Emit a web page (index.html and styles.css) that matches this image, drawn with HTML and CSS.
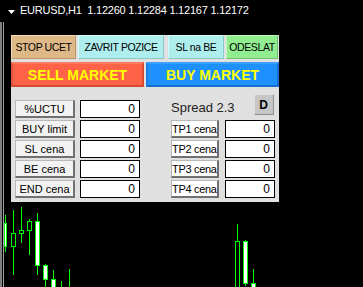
FILE: index.html
```html
<!DOCTYPE html>
<html>
<head>
<meta charset="utf-8">
<link rel="stylesheet" href="styles.css">
</head>
<body>
<div class="screen">
  <svg class="chart" width="363" height="287" viewBox="0 0 363 287">
    <line x1="1" y1="22" x2="1" y2="287" stroke="#808080" stroke-width="2"/>
    <line x1="3.5" y1="22" x2="3.5" y2="287" stroke="#a0a0a0" stroke-width="1"/>
    <g stroke="#00ff00" stroke-width="1">
      <line x1="5.5" y1="215" x2="5.5" y2="252"/>
      <rect x="4.5" y="223.5" width="2" height="23" fill="#fff"/>
      <line x1="13.5" y1="210" x2="13.5" y2="275"/>
      <rect x="11.5" y="233.5" width="4" height="13" fill="#000"/>
      <line x1="21.5" y1="207" x2="21.5" y2="243"/>
      <rect x="19.5" y="230.5" width="4" height="3" fill="#000"/>
      <line x1="29.5" y1="219" x2="29.5" y2="255"/>
      <rect x="27.5" y="221.5" width="4" height="9" fill="#000"/>
      <line x1="37.5" y1="213" x2="37.5" y2="275"/>
      <rect x="35.5" y="221.5" width="4" height="44" fill="#fff"/>
      <line x1="45.5" y1="264" x2="45.5" y2="287"/>
      <rect x="43.5" y="265.5" width="4" height="14" fill="#fff"/>
      <line x1="53.5" y1="270" x2="53.5" y2="287"/>
      <rect x="51.5" y="279.5" width="4" height="10" fill="#fff"/>
      <line x1="61.5" y1="281" x2="61.5" y2="287"/>
      <line x1="69.5" y1="269" x2="69.5" y2="287"/>
      <line x1="237.5" y1="224" x2="237.5" y2="287"/>
      <rect x="235.5" y="241.5" width="4" height="50" fill="#000"/>
      <line x1="245.5" y1="240" x2="245.5" y2="286"/>
      <rect x="243.5" y="241.5" width="4" height="42" fill="#fff"/>
      <line x1="253.5" y1="269" x2="253.5" y2="287"/>
      <rect x="251.5" y="283.5" width="4" height="8" fill="#fff"/>
    </g>
  </svg>

  <div class="title">
    <svg class="tri" width="7" height="4" viewBox="0 0 7 4"><polygon points="0,0 7,0 3.5,4" fill="#fff"/></svg>
    <span>EURUSD,H1&nbsp;&nbsp;1.12260 1.12284 1.12167 1.12172</span>
  </div>

  <div class="panel">
    <div class="row-top">
      <div class="tbtn stop">STOP UCET</div>
      <div class="tbtn zavrit">ZAVRIT POZICE</div>
      <div class="tbtn slbe">SL na BE</div>
      <div class="tbtn odeslat">ODESLAT</div>
    </div>
    <div class="row-market">
      <div class="mbtn sell">SELL MARKET</div>
      <div class="mbtn buy">BUY MARKET</div>
    </div>
    <div class="fields">
      <div class="col left">
        <div class="frow"><div class="lbl">%UCTU</div><div class="inp">0</div></div>
        <div class="frow"><div class="lbl">BUY limit</div><div class="inp">0</div></div>
        <div class="frow"><div class="lbl">SL cena</div><div class="inp">0</div></div>
        <div class="frow"><div class="lbl">BE cena</div><div class="inp">0</div></div>
        <div class="frow"><div class="lbl">END cena</div><div class="inp">0</div></div>
      </div>
      <div class="col right">
        <div class="frow spread-row"><span class="spread">Spread 2.3</span><div class="dbtn">D</div></div>
        <div class="frow"><div class="lbl tp">TP1 cena</div><div class="inp tpin">0</div></div>
        <div class="frow"><div class="lbl tp">TP2 cena</div><div class="inp tpin">0</div></div>
        <div class="frow"><div class="lbl tp">TP3 cena</div><div class="inp tpin">0</div></div>
        <div class="frow"><div class="lbl tp">TP4 cena</div><div class="inp tpin">0</div></div>
      </div>
    </div>
  </div>
</div>
</body>
</html>
```
FILE: styles.css
```css
html, body {
  margin: 0;
  padding: 0;
  background: #000;
}
.screen {
  position: relative;
  width: 363px;
  height: 287px;
  overflow: hidden;
  font-family: "Liberation Sans", Arial, sans-serif;
}
.chart {
  position: absolute;
  left: 0;
  top: 0;
}
.title {
  position: relative;
  height: 22px;
  display: flex;
  align-items: flex-start;
  padding-left: 8px;
  color: #fff;
  font-size: 11px;
  letter-spacing: -0.22px;
  line-height: 13px;
  padding-top: 4px;
  box-sizing: border-box;
}
.tri {
  margin-top: 6px;
  margin-right: 5px;
}
.panel {
  position: relative;
  margin-left: 11px;
  margin-top: 13px;
  width: 268px;
  height: 167px;
  background: #e0e0e0;
}
.row-top {
  display: flex;
  height: 24px;
}
.tbtn {
  box-sizing: border-box;
  height: 24px;
  display: flex;
  align-items: center;
  justify-content: center;
  font-size: 10.5px;
  letter-spacing: -0.4px;
  white-space: nowrap;
  color: #000;
  border: 1px solid;
}
.stop {
  width: 65px;
  background: #deb887;
  border-color: #f3d9b0 #b8956a #b8956a #f3d9b0;
}
.zavrit {
  width: 86px;
  margin-left: 2px;
  background: #afeeee;
  border-color: #d8fafa #8cc8c8 #8cc8c8 #d8fafa;
}
.slbe {
  width: 56px;
  margin-left: 4px;
  background: #afeeee;
  border-color: #d8fafa #8cc8c8 #8cc8c8 #d8fafa;
}
.odeslat {
  width: 52px;
  margin-left: 2px;
  background: #90ee90;
  border-color: #c0f8c0 #70c070 #70c070 #c0f8c0;
}
.row-market {
  display: flex;
  gap: 2px;
  margin-top: 3px;
  height: 25px;
}
.mbtn {
  box-sizing: border-box;
  width: 133px;
  height: 25px;
  display: flex;
  align-items: center;
  justify-content: center;
  font-size: 14px;
  font-weight: bold;
  color: #ffff00;
  border: 2px solid;
}
.sell {
  background: #ff6347;
  border-color: #ff7a60 #d94a32 #d94a32 #e0553c;
}
.buy {
  background: #1e90ff;
  border-color: #3aa0ff #1670d0 #1670d0 #1a80e8;
}
.fields {
  display: flex;
  margin-top: 13px;
  padding-left: 4px;
}
.col {
  display: flex;
  flex-direction: column;
  gap: 2px;
}
.right {
  margin-left: 31px;
}
.frow {
  display: flex;
  height: 18px;
}
.lbl {
  box-sizing: border-box;
  width: 60px;
  height: 18px;
  display: flex;
  align-items: center;
  justify-content: center;
  font-size: 11px;
  color: #000;
  background: #f2f2f2;
  border-top: 1px solid #b8b8b8;
  border-left: 1px solid #b8b8b8;
  border-right: 2px solid #707070;
  border-bottom: 2px solid #707070;
  padding-top: 1px;
  white-space: nowrap;
}
.lbl.tp {
  width: 48px;
  background: #fff;
  justify-content: flex-start;
  padding-left: 0;
  letter-spacing: -0.3px;
}
.inp {
  box-sizing: border-box;
  width: 60px;
  height: 18px;
  margin-left: 5px;
  background: #fff;
  border: 1px solid #000;
  display: flex;
  align-items: center;
  justify-content: flex-end;
  padding-right: 4px;
  font-size: 12px;
  color: #000;
}
.inp.tpin {
  width: 50px;
  margin-left: 6px;
}
.spread-row {
  position: relative;
  align-items: flex-end;
}
.spread {
  font-size: 13px;
  color: #222;
  line-height: 15px;
  padding-bottom: 3px;
}
.dbtn {
  box-sizing: border-box;
  width: 20px;
  height: 21px;
  margin-left: 19px;
  align-self: flex-start;
  margin-top: -6px;
  background: #c6c6c6;
  border-top: 1px solid #e0e0e0;
  border-left: 1px solid #e0e0e0;
  border-right: 1px solid #909090;
  border-bottom: 1px solid #909090;
  display: flex;
  align-items: center;
  justify-content: center;
  font-weight: bold;
  font-size: 12px;
  color: #000;
}
```
